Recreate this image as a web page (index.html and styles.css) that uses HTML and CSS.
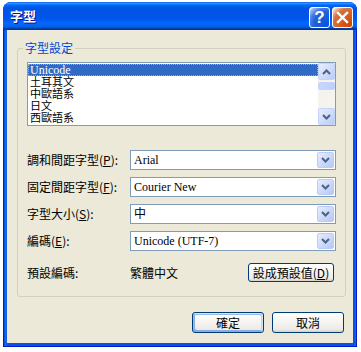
FILE: index.html
```html
<!DOCTYPE html>
<html lang="zh-Hant">
<head>
<meta charset="utf-8">
<title>字型</title>
<link rel="stylesheet" href="styles.css">
</head>
<body>
<div class="window">
  <div class="titlebar">
    <span class="title">字型</span>
    <div class="tbtns">
      <div class="tbtn help">?</div>
      <div class="tbtn close">
        <svg width="13" height="13" viewBox="0 0 13 13"><path d="M2 2 L11 11 M11 2 L2 11" stroke="#fff" stroke-width="2.4" stroke-linecap="square"/></svg>
      </div>
    </div>
  </div>
  <div class="client">
    <fieldset class="group">
      <legend class="legend">字型設定</legend>
      <div class="listbox">
        <ul class="items">
          <li class="item sel">Unicode</li>
          <li class="item">土耳其文</li>
          <li class="item">中歐語系</li>
          <li class="item">日文</li>
          <li class="item">西歐語系</li>
        </ul>
        <div class="vscroll">
          <div class="sbtn">
            <svg width="9" height="6" viewBox="0 0 9 6"><path d="M1 5 L4.5 1.5 L8 5" fill="none" stroke="#4D6185" stroke-width="2"/></svg>
          </div>
          <div class="track"><div class="thumb"></div></div>
          <div class="sbtn">
            <svg width="9" height="6" viewBox="0 0 9 6"><path d="M1 1 L4.5 4.5 L8 1" fill="none" stroke="#4D6185" stroke-width="2"/></svg>
          </div>
        </div>
      </div>
      <div class="form">
        <div class="row">
          <span class="label">調和間距字型(<u>P</u>):</span>
          <div class="combo"><span class="value">Arial</span><div class="dd"><svg width="9" height="6" viewBox="0 0 9 6"><path d="M1 1 L4.5 4.5 L8 1" fill="none" stroke="#4D6185" stroke-width="2"/></svg></div></div>
        </div>
        <div class="row">
          <span class="label">固定間距字型(<u>F</u>):</span>
          <div class="combo"><span class="value">Courier New</span><div class="dd"><svg width="9" height="6" viewBox="0 0 9 6"><path d="M1 1 L4.5 4.5 L8 1" fill="none" stroke="#4D6185" stroke-width="2"/></svg></div></div>
        </div>
        <div class="row">
          <span class="label">字型大小(<u>S</u>):</span>
          <div class="combo"><span class="value">中</span><div class="dd"><svg width="9" height="6" viewBox="0 0 9 6"><path d="M1 1 L4.5 4.5 L8 1" fill="none" stroke="#4D6185" stroke-width="2"/></svg></div></div>
        </div>
        <div class="row">
          <span class="label">編碼(<u>E</u>):</span>
          <div class="combo"><span class="value">Unicode (UTF-7)</span><div class="dd"><svg width="9" height="6" viewBox="0 0 9 6"><path d="M1 1 L4.5 4.5 L8 1" fill="none" stroke="#4D6185" stroke-width="2"/></svg></div></div>
        </div>
        <div class="row row-default">
          <span class="label">預設編碼:</span>
          <span class="static">繁體中文</span>
          <button class="btn btn-setdef">設成預設值(<u>D</u>)</button>
        </div>
      </div>
    </fieldset>
    <div class="actions">
      <button class="btn btn-ok default">確定</button>
      <button class="btn btn-ok">取消</button>
    </div>
  </div>
</div>
</body>
</html>
```

FILE: styles.css
```css
* { box-sizing: border-box; }
html, body { margin: 0; padding: 0; background: #ffffff; }
body {
  font-family: "Noto Sans CJK TC", "Liberation Sans", sans-serif;
  font-size: 12px;
  color: #000;
}
.window {
  margin: 2px 0 0 3px;
  width: 354px;
  height: 345px;
  display: flex;
  flex-direction: column;
  background: linear-gradient(to right, #0A4FD8 0, #1D68EE 2px, #0855DD 3px, #0855DD 351px, #1D68EE 352px, #0A4FD8 354px);
  border-radius: 8px 8px 0 0;
  border: 1px solid #0019CF;
  border-top: none;
}
.titlebar {
  height: 28px;
  margin: 0 -1px;
  border-radius: 8px 8px 0 0;
  background: linear-gradient(to bottom, #0058EE 0%, #3593FF 4%, #288EFF 6%, #127DFF 8%, #036FFC 10%, #0262EE 14%, #0057E5 20%, #0054E3 24%, #0055EB 56%, #005BF5 66%, #026AFE 76%, #0062EF 86%, #0052D6 92%, #0040AB 94%, #003092 100%);
  display: flex;
  align-items: center;
  justify-content: space-between;
  padding: 0 4px 0 7px;
}
.title {
  color: #fff;
  font-weight: bold;
  font-size: 13px;
  line-height: 16px;
  text-shadow: 1px 1px 0 #0F1089;
}
.tbtns { display: flex; gap: 2px; margin-top: 2px; }
.tbtn {
  width: 21px;
  height: 21px;
  border: 1px solid #fff;
  border-radius: 3px;
  display: flex;
  align-items: center;
  justify-content: center;
}
.help {
  background: radial-gradient(circle at 90% 90%, #0054E9 0%, #2263D5 55%, #4479E4 70%, #A3BBEC 90%, #fff 100%);
  color: #fff;
  font-family: "Liberation Sans", sans-serif;
  font-weight: bold;
  font-size: 17px;
  line-height: 19px;
}
.close {
  background: radial-gradient(circle at 90% 90%, #CC4600 0%, #DC6527 55%, #CD7546 70%, #FFCCB2 90%, #fff 100%);
}
.client {
  flex: 1;
  margin: 0 3px 3px 3px;
  background: #ECE9D8;
  padding: 11px 8px 0 10px;
}
.group {
  margin: 0;
  width: 328px;
  border: 1px solid #D0D0BF;
  border-radius: 3px;
  padding: 7px 9px 14px 9px;
}
.legend {
  color: #0046D5;
  padding: 0 2px;
  margin-left: -4px;
  line-height: 14px;
}
.listbox {
  height: 64px;
  border: 1px solid #7F9DB9;
  background: #fff;
  display: flex;
}
.items {
  list-style: none;
  margin: 0;
  padding: 1px 0 0 0;
  flex: 1;
}
.item {
  height: 12px;
  line-height: 12px;
  padding-left: 2px;
  font-family: "Liberation Serif", "Noto Sans CJK TC", serif;
  font-size: 11px;
  white-space: nowrap;
}
.item.sel {
  background: #316AC5;
  color: #fff;
  font-size: 12px;
  outline: 1px dotted #C8A060;
  outline-offset: -1px;
}
.vscroll {
  width: 17px;
  display: flex;
  flex-direction: column;
  background: #F4F3EE;
}
.sbtn {
  height: 17px;
  border: 1px solid #C3D3FD;
  border-radius: 2px;
  background: linear-gradient(135deg, #E6EEFC 0%, #CCDAFA 60%, #B8CBF6 100%);
  display: flex;
  align-items: center;
  justify-content: center;
}
.track { flex: 1; padding-top: 2px; }
.thumb {
  height: 8px;
  border: 1px solid #C3D3FD;
  border-radius: 2px;
  background: linear-gradient(to right, #C9D8FC, #BDCFFA);
}
.form { display: flex; flex-direction: column; gap: 7px; margin-top: 24px; }
.row { display: flex; align-items: center; height: 20px; }
.label { width: 103px; white-space: nowrap; line-height: 14px; }
.label u, .btn u { text-decoration: underline; text-underline-offset: 1px; }
.combo {
  width: 206px;
  height: 20px;
  border: 1px solid #7F9DB9;
  background: #fff;
  display: flex;
  align-items: center;
  padding: 1px;
}
.value {
  flex: 1;
  padding-left: 2px;
  font-family: "Liberation Serif", "Noto Sans CJK TC", serif;
  font-size: 12px;
  line-height: 14px;
  white-space: nowrap;
}
.dd {
  width: 17px;
  height: 16px;
  border: 1px solid #BBCDF6;
  border-radius: 2px;
  background: linear-gradient(135deg, #E6EEFC 0%, #C8D7FA 60%, #B4C8F5 100%);
  display: flex;
  align-items: center;
  justify-content: center;
}
.row-default { margin-top: 5px; height: 19px; }
.static { line-height: 14px; }
.btn {
  font-family: "Noto Sans CJK TC", "Liberation Sans", sans-serif;
  font-size: 12px;
  color: #000;
  background: linear-gradient(180deg, #fff, #ECEBE6 86%, #D6D0C5);
  border: 1px solid #003C74;
  border-radius: 3px;
  padding: 0;
  line-height: 14px;
}
.btn-setdef { margin-left: auto; margin-right: 2px; width: 86px; height: 19px; }
.actions {
  display: flex;
  justify-content: flex-end;
  gap: 8px;
  margin-top: 15px;
  padding-right: 1px;
}
.btn-ok { width: 72px; height: 21px; }
.default {
  box-shadow: inset -1px 1px #CEE7FF, inset 1px 2px #98B8EA, inset -2px 2px #BCD4F6, inset 1px -1px #89ADE4, inset 2px -2px #89ADE4;
}
```
